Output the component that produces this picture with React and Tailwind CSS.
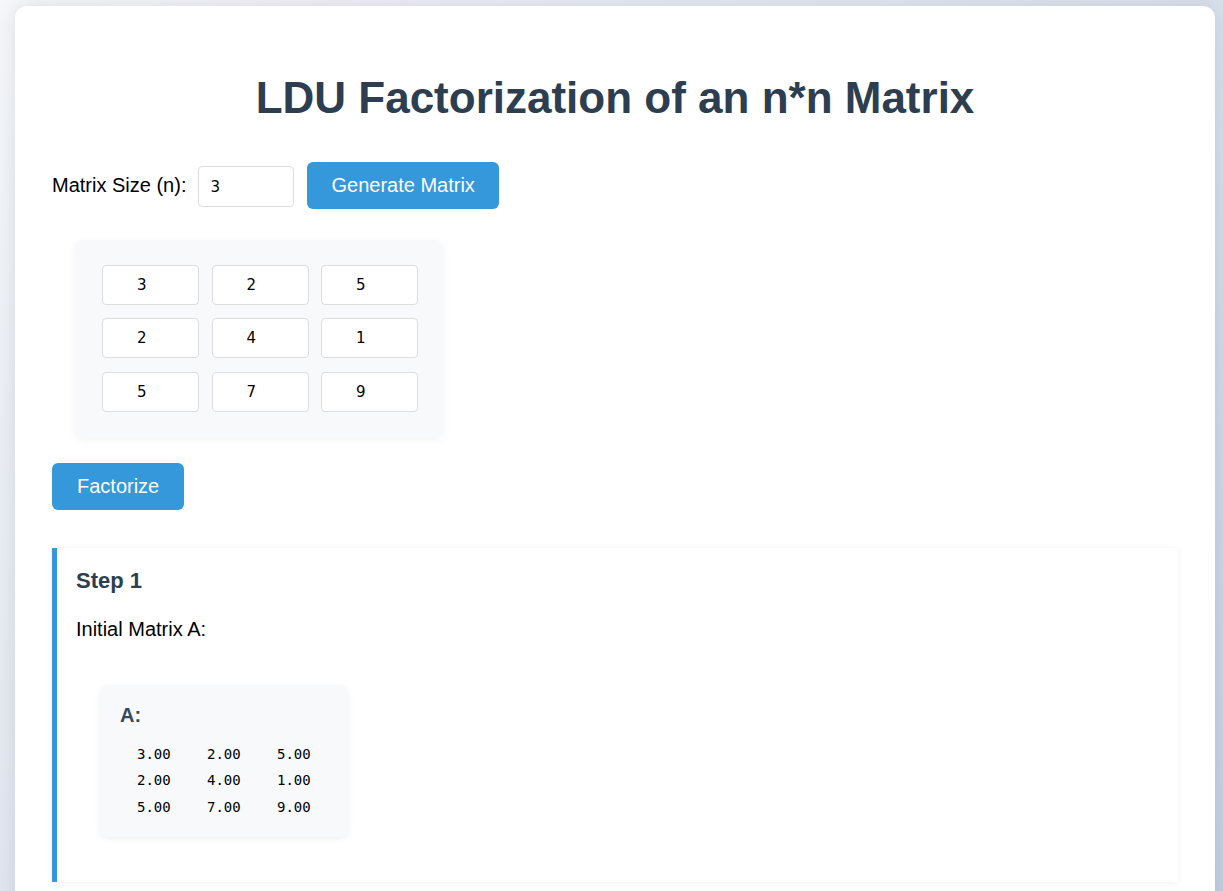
import React, { useState } from 'react';

const grid = [
    [3, 2, 5],
    [2, 4, 1],
    [5, 7, 9],
];

function MatrixView({ label, rows }) {
    return (
        <div className="ml-6 mt-[44px] w-[248px] h-[152px] rounded-lg bg-[#f8f9fa] pl-5 pt-[19px] shadow-[0_2px_6px_rgba(0,0,0,0.06)]">
            <h4 className="text-[20px] font-bold text-[#34495e] leading-[1.15]">{label}</h4>
            <div className="mt-[14px] ml-[17px] font-['DejaVu_Sans_Mono',monospace] text-[14px] text-black">
                {rows.map((r, i) => (
                    <div key={i} className="grid grid-cols-[70px_70px_70px] h-[26.5px] items-center">
                        {r.map((v, j) => (
                            <span key={j}>{v.toFixed(2)}</span>
                        ))}
                    </div>
                ))}
            </div>
        </div>
    );
}

export default function App() {
    const [n, setN] = useState('3');
    const [cells, setCells] = useState(grid.map((r) => r.map(String)));

    const setCell = (i, j, v) =>
        setCells((prev) => prev.map((r, a) => r.map((c, b) => (a === i && b === j ? v : c))));

    return (
        <div className="min-h-screen bg-[linear-gradient(135deg,#f5f7fa_0%,#c3cfe2_100%)] pt-[6px] pl-[15px] font-['Liberation_Sans',Arial,sans-serif]">
            <div className="w-[1200px] rounded-xl bg-white px-[37px] pt-[67px] pb-[37px] shadow-[0_0_20px_rgba(0,0,0,0.1)]">
                <h1 className="text-center text-[44px] font-bold text-[#2c3e50] leading-[1.15]">
                    LDU Factorization of an n*n Matrix
                </h1>

                {/* size row */}
                <div className="mt-[38px] flex items-center h-[47px]">
                    <label className="text-[20px] text-black">Matrix Size (n):</label>
                    <input
                        type="text"
                        value={n}
                        onChange={(e) => setN(e.target.value)}
                        className="ml-3 mt-[3px] w-[96px] h-[41px] rounded border border-[#ddd] pl-[11px] font-['DejaVu_Sans',sans-serif] text-[15px] text-black outline-none"
                    />
                    <button className="ml-[13px] h-[47px] rounded-md bg-[#3498db] px-6 text-[20px] text-white">
                        Generate Matrix
                    </button>
                </div>

                {/* matrix input */}
                <div className="ml-[23px] mt-[31px] inline-grid grid-cols-[97px_97px_97px] gap-x-[12.5px] gap-y-[13.5px] rounded-lg bg-[#f8f9fa] pl-[27px] pt-[25px] pr-[25px] pb-[26px] shadow-[0_2px_8px_rgba(0,0,0,0.05)]">
                    {cells.map((r, i) =>
                        r.map((v, j) => (
                            <input
                                key={`${i}-${j}`}
                                type="text"
                                value={v}
                                onChange={(e) => setCell(i, j, e.target.value)}
                                className="h-[40px] w-[97px] rounded border border-[#ddd] bg-white pl-[34px] font-['DejaVu_Sans',sans-serif] text-[15px] text-black outline-none"
                            />
                        ))
                    )}
                </div>

                <div className="mt-[25px]">
                    <button className="h-[47px] rounded-md bg-[#3498db] px-[25px] text-[20px] text-white">Factorize</button>
                </div>

                {/* steps */}
                <div className="mt-[38px] h-[334px] border-l-[5px] border-[#3498db] bg-white pl-[19px] pt-[20px] shadow-[0_1px_6px_rgba(0,0,0,0.06)]">
                    <h3 className="text-[22px] font-bold text-[#2c3e50] leading-[1.15]">Step 1</h3>
                    <p className="mt-[25px] text-[20px] text-black leading-[1.15]">Initial Matrix A:</p>
                    <MatrixView label="A:" rows={grid} />
                </div>
            </div>
        </div>
    );
}
